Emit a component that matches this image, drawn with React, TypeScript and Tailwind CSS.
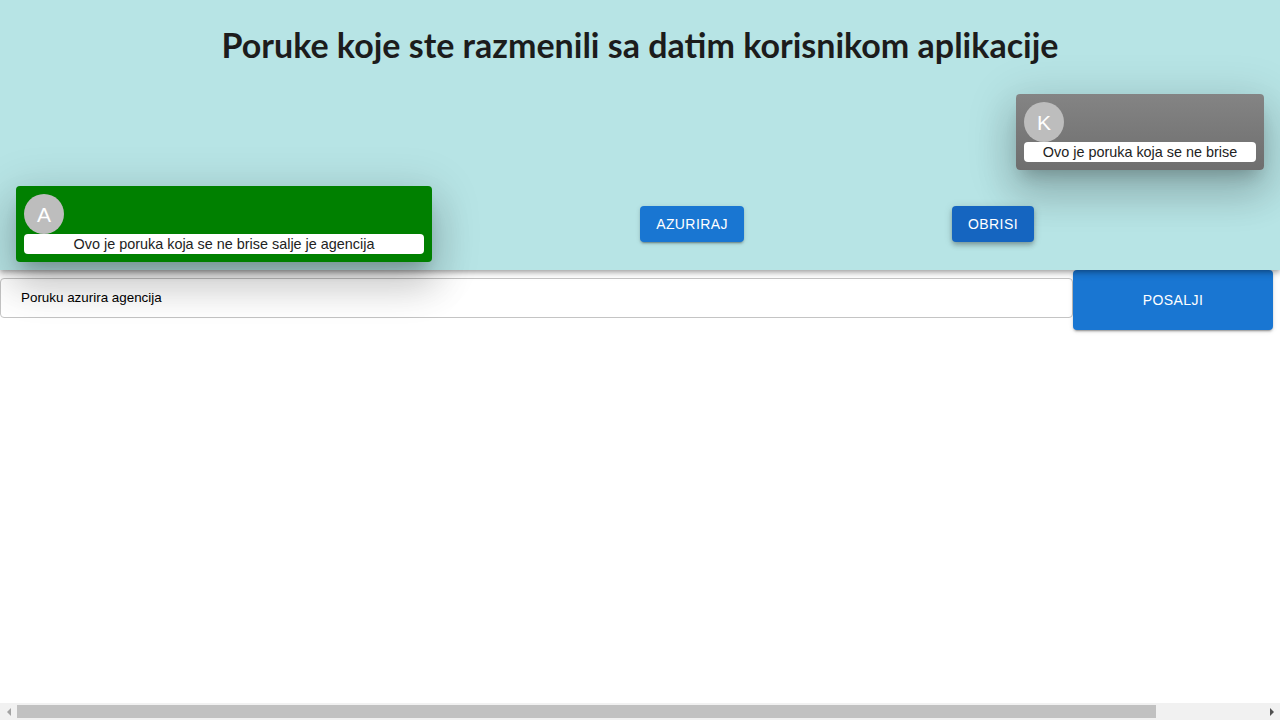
import React from "react";

function Card({ letter, text, className, boxW }: { letter: string; text: string; className: string; boxW: string }) {
  return (
    <div className={`rounded-[4px] p-2 flex flex-col ${className}`}>
      <div className="w-10 h-10 rounded-full bg-[#bdbdbd] flex items-center justify-center text-white text-[21px] leading-none font-['Liberation_Sans',Arial,sans-serif]">
        {letter}
      </div>
      <div className={`${boxW} h-5 bg-white rounded-[4px] text-[14.4px] leading-5 text-center text-[#222] font-['Liberation_Sans',Arial,sans-serif]`}>
        {text}
      </div>
    </div>
  );
}

export default function App() {
  return (
    <div className="h-screen w-full flex flex-col bg-white overflow-hidden font-['Liberation_Sans',Arial,sans-serif]">
      <div className="relative z-10 h-[270px] shrink-0 bg-[#b7e4e5] shadow-[0_2px_4px_-1px_rgba(0,0,0,0.2),0_4px_5px_0_rgba(0,0,0,0.14),0_1px_10px_0_rgba(0,0,0,0.12)] flex flex-col">
        <h1 className="h-[94px] pt-[22px] text-center text-[34px] leading-[46px] font-bold text-[#1c1c1c] font-['Lato',sans-serif]">
          Poruke koje ste razmenili sa datim korisnikom aplikacije
        </h1>
        <div className="flex justify-end pr-4">
          <Card
            letter="K"
            text="Ovo je poruka koja se ne brise"
            boxW="w-[232px]"
            className="w-[248px] h-[76px] bg-gradient-to-b from-[#848484] to-[#6e6e6e] shadow-[0_11px_15px_-7px_rgba(0,0,0,0.2),0_24px_38px_3px_rgba(0,0,0,0.14),0_9px_46px_8px_rgba(0,0,0,0.12)]"
          />
        </div>
        <div className="mt-4 flex items-center pl-4">
          <Card
            letter="A"
            text="Ovo je poruka koja se ne brise salje je agencija"
            boxW="w-[400px]"
            className="relative z-20 w-[416px] h-[76px] bg-[#008000] shadow-[0_11px_15px_-7px_rgba(0,0,0,0.2),0_24px_38px_3px_rgba(0,0,0,0.14),0_9px_46px_8px_rgba(0,0,0,0.12)]"
          />
          <button className="ml-[208px] h-9 w-[104px] rounded-[4px] bg-[#1976d2] text-white text-[14px] font-medium uppercase tracking-[0.4px] shadow-[0_3px_1px_-2px_rgba(0,0,0,0.2),0_2px_2px_0_rgba(0,0,0,0.14),0_1px_5px_0_rgba(0,0,0,0.12)]">
            Azuriraj
          </button>
          <button className="ml-[208px] h-9 w-[82px] rounded-[4px] bg-[#1565c0] text-white text-[14px] font-medium uppercase tracking-[0.4px] shadow-[0_2px_4px_-1px_rgba(0,0,0,0.2),0_4px_5px_0_rgba(0,0,0,0.14),0_1px_10px_0_rgba(0,0,0,0.12)]">
            Obrisi
          </button>
        </div>
      </div>
      <div className="flex items-start">
        <div className="flex-1 mt-2 h-10 border border-[#c4c4c4] rounded-[4px] flex items-center pl-5 text-[13.4px] text-black">
          Poruku azurira agencija
        </div>
        <button className="w-[200px] h-[60px] mr-[7px] rounded-[4px] bg-[#1976d2] text-white text-[14px] font-medium uppercase tracking-[0.4px] shadow-[0_3px_1px_-2px_rgba(0,0,0,0.2),0_2px_2px_0_rgba(0,0,0,0.14),0_1px_5px_0_rgba(0,0,0,0.12)]">
          Posalji
        </button>
      </div>
      <div className="mt-auto h-[17px] shrink-0 bg-[#f1f1f1] flex items-center">
        <div className="w-[17px] flex justify-center">
          <div className="w-0 h-0 border-y-[4px] border-y-transparent border-r-[4px] border-r-[#a3a3a3]" />
        </div>
        <div className="w-[1139px] h-[13px] bg-[#c1c1c1]" />
        <div className="flex-1" />
        <div className="w-[17px] flex justify-center">
          <div className="w-0 h-0 border-y-[4px] border-y-transparent border-l-[4px] border-l-[#505050]" />
        </div>
      </div>
    </div>
  );
}
